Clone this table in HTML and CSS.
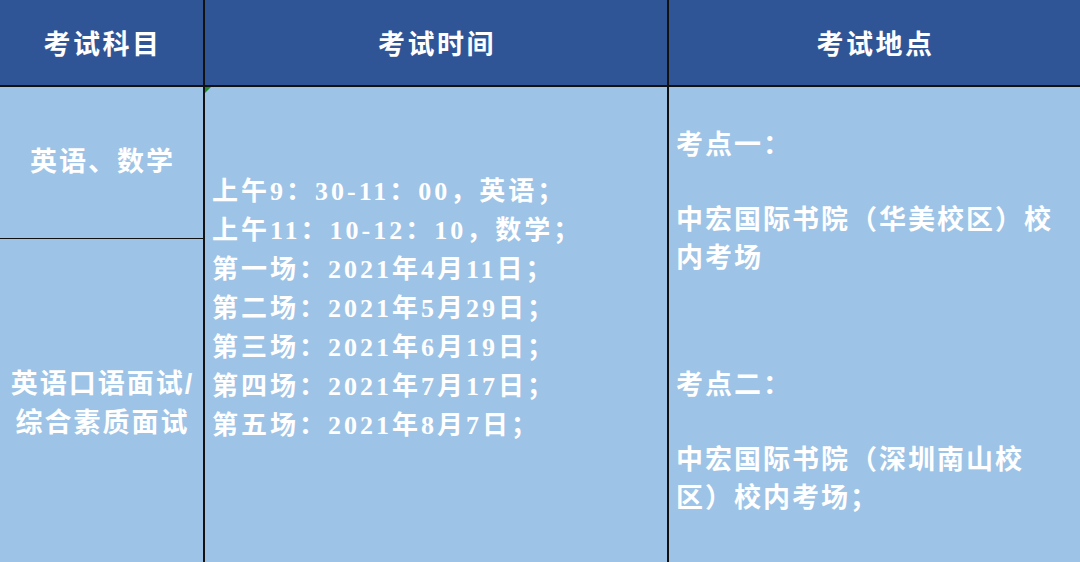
FILE: index.html
```html
<!DOCTYPE html>
<html lang="zh-CN">
<head>
<meta charset="utf-8">
<title>考试安排</title>
<link rel="stylesheet" href="styles.css">
</head>
<body>
<div class="table">
  <div class="th th-border">考试科目</div>
  <div class="th th-border">考试时间</div>
  <div class="th">考试地点</div>

  <div class="subjects cell-border">
    <div class="subject subject-top">英语、数学</div>
    <div class="subject subject-bottom">英语口语面试/<br>综合素质面试</div>
  </div>

  <div class="times cell-border">
    <div class="line">上午9：30-11：00，英语；</div>
    <div class="line">上午11：10-12：10，数学；</div>
    <div class="line">第一场：2021年4月11日；</div>
    <div class="line">第二场：2021年5月29日；</div>
    <div class="line">第三场：2021年6月19日；</div>
    <div class="line">第四场：2021年7月17日；</div>
    <div class="line">第五场：2021年8月7日；</div>
  </div>

  <div class="places">
    <p class="place-title">考点一：</p>
    <p class="place place-first">中宏国际书院（华美校区）校内考场</p>
    <p class="place-title">考点二：</p>
    <p class="place">中宏国际书院（深圳南山校区）校内考场；</p>
  </div>
</div>
</body>
</html>
```

FILE: styles.css
```css
html, body {
  margin: 0;
  padding: 0;
  width: 1080px;
  height: 562px;
  overflow: hidden;
  background: #9dc3e6;
}

.table {
  display: grid;
  grid-template-columns: 205px 464px 1fr;
  grid-template-rows: 87px 481px;
  width: 1080px;
  color: #ffffff;
  font-family: "Liberation Sans", "Noto Sans CJK SC", sans-serif;
  font-weight: bold;
  text-spacing-trim: space-all;
}

.th {
  box-sizing: border-box;
  background: #2f5597;
  border-bottom: 2px solid #111111;
  display: flex;
  align-items: center;
  justify-content: center;
  font-size: 27px;
  letter-spacing: 2.5px;
  padding-left: 2px;
  padding-bottom: 1px;
}

.th-border,
.cell-border {
  border-right: 2px solid #111111;
}

.th-border {
  box-sizing: border-box;
}

.subjects {
  box-sizing: border-box;
  display: flex;
  flex-direction: column;
}

.subject {
  display: flex;
  align-items: center;
  justify-content: center;
  text-align: center;
  font-size: 27px;
  letter-spacing: 2px;
  line-height: 39px;
  padding-left: 2px;
}

.subject-top {
  height: 151px;
  border-bottom: 1px solid #111111;
}

.subject-bottom {
  flex: 1;
}

.times {
  box-sizing: border-box;
  position: relative;
  padding: 85px 0 0 7px;
  font-family: "Liberation Serif", "Noto Sans CJK SC", serif;
  font-size: 26px;
  letter-spacing: 3px;
  line-height: 39px;
}

.times::before {
  content: "";
  position: absolute;
  left: 0;
  top: 0;
  width: 0;
  height: 0;
  border-top: 6px solid #1f8a2a;
  border-right: 6px solid transparent;
}

.line {
  white-space: nowrap;
}

.places {
  box-sizing: border-box;
  padding: 39px 10px 0 7px;
  font-size: 27px;
  letter-spacing: 2px;
  line-height: 38px;
}

.places p {
  margin: 0;
}

.place-title {
  margin-bottom: 37px !important;
}

.place-first {
  margin-bottom: 89px !important;
}
```
